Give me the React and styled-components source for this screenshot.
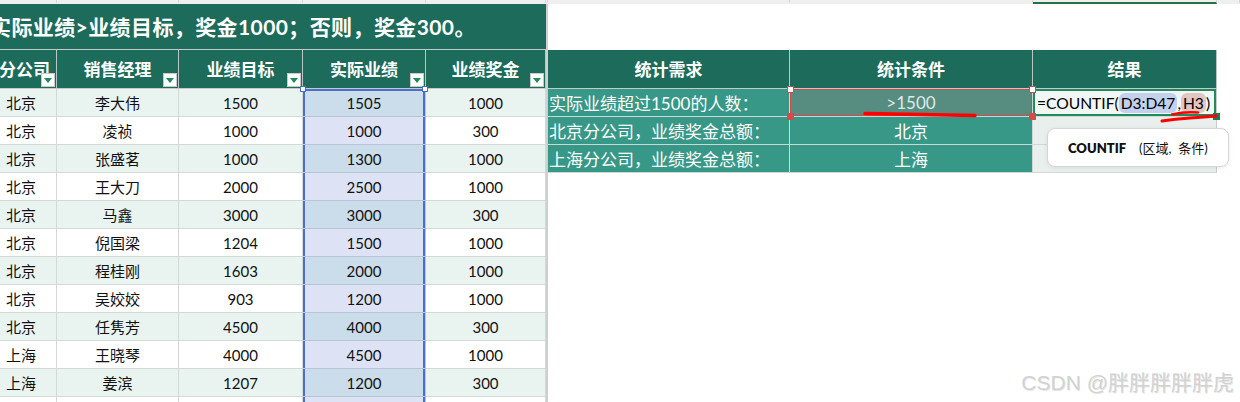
import React from 'react';
import styled, { createGlobalStyle } from 'styled-components';

const Global = createGlobalStyle`
  html, body { margin: 0; padding: 0; background: #fff; overflow: hidden; }
  #root { width: 1240px; height: 402px; }
`;

const FONT = `Lato, "Noto Sans CJK SC", sans-serif`;
const DARK = '#1d6b5b';
const TEAL = '#389887';
const GRID = '#d3d9d7';

const LEFT_COLS = [57, 122, 124, 123, 120];
const RIGHT_COLS = [242, 243, 184];

const Sheet = styled.div`
  position: relative;
  width: 1240px;
  height: 402px;
  overflow: hidden;
  background: #fff;
  font-family: ${FONT};
  display: flex;
  flex-direction: column;
`;

const ColumnStrip = styled.div`
  display: flex;
  height: 4px;
  flex-shrink: 0;
  background: #efefef;
`;

const StripCell = styled.div`
  box-sizing: border-box;
  width: ${(p) => (p.$w ? `${p.$w}px` : 'auto')};
  flex: ${(p) => (p.$w ? '0 0 auto' : '1')};
  border-right: 1px solid #d6d6d6;
  border-bottom: 2px solid ${(p) => (p.$active ? '#217346' : 'transparent')};
`;

const Body = styled.div`
  display: flex;
  flex: 1;
  min-height: 0;
  overflow: hidden;
`;

const LeftPane = styled.div`
  width: 546px;
  flex-shrink: 0;
  display: flex;
  flex-direction: column;
`;

const Divider = styled.div`
  width: 2px;
  flex-shrink: 0;
  background: #cfcfcf;
`;

const RightPane = styled.div`
  flex: 1;
  display: flex;
  flex-direction: column;
`;

const Title = styled.div`
  box-sizing: border-box;
  height: 46px;
  flex-shrink: 0;
  background: ${DARK};
  border-bottom: 1px solid #c4cbc9;
  color: #fff;
  font-size: 21px;
  font-weight: 700;
  display: flex;
  align-items: center;
  white-space: nowrap;
  overflow: hidden;
  padding-bottom: 2px;
`;

const TitleText = styled.span`
  margin-left: -10px;
  letter-spacing: 0.4px;
`;

const RightBlank = styled.div`
  height: 46px;
  flex-shrink: 0;
  background: #fff;
`;

const Row = styled.div`
  display: flex;
  flex-shrink: 0;
  height: ${(p) => p.$h}px;
`;

const HeadCell = styled.div`
  position: relative;
  box-sizing: border-box;
  width: ${(p) => p.$w}px;
  flex-shrink: 0;
  background: ${DARK};
  color: #fff;
  font-size: 17px;
  font-weight: 700;
  border-right: 1px solid #b9c6c2;
  border-bottom: 1px solid #c4cbc9;
  display: flex;
  align-items: center;
  justify-content: ${(p) => (p.$left ? 'flex-start' : 'center')};
  padding-bottom: 1px;
  white-space: nowrap;
  overflow: hidden;
`;

const ClipText = styled.span`
  margin-left: ${(p) => p.$shift || 0}px;
`;

const FilterButton = styled.span`
  position: absolute;
  right: 1px;
  bottom: 1px;
  width: 14px;
  height: 14px;
  box-sizing: border-box;
  background: #fff;
  border: 1px solid #c9c9c9;
  display: flex;
  align-items: center;
  justify-content: center;
  &::after {
    content: '';
    border-left: 4px solid transparent;
    border-right: 4px solid transparent;
    border-top: 5px solid #1f8a5c;
    margin-top: 1px;
  }
`;

const cellBg = (p) => {
  if (p.$sel) return p.$odd ? '#cbdcea' : '#dde3f4';
  return p.$odd ? '#e9f4f1' : '#ffffff';
};

const DataCell = styled.div`
  position: relative;
  box-sizing: border-box;
  width: ${(p) => p.$w}px;
  flex-shrink: 0;
  background: ${cellBg};
  color: #111;
  font-size: 15px;
  border-right: 1px solid ${(p) => (p.$sel ? '#b9c4d8' : GRID)};
  border-bottom: 1px solid ${(p) => (p.$sel ? '#b9c4d8' : GRID)};
  display: flex;
  align-items: center;
  justify-content: ${(p) => (p.$left ? 'flex-start' : 'center')};
  padding-left: ${(p) => (p.$left ? '6px' : '0')};
  box-shadow: ${(p) =>
    p.$sel
      ? `inset 2px 0 0 #4a6fd0, inset -2px 0 0 #4a6fd0${p.$first ? ', inset 0 2px 0 #4a6fd0' : ''}`
      : 'none'};
  white-space: nowrap;
`;

const SelHandle = styled.span`
  position: absolute;
  top: -3px;
  ${(p) => (p.$side === 'left' ? 'left: -3px;' : 'right: -3px;')}
  width: 6px;
  height: 6px;
  box-sizing: border-box;
  background: #fff;
  border: 1px solid #4a6fd0;
  z-index: 2;
`;

const StatHead = styled(HeadCell)`
  border-right: 1px solid #b9c6c2;
`;

const StatCell = styled.div`
  position: relative;
  box-sizing: border-box;
  width: ${(p) => p.$w}px;
  flex-shrink: 0;
  background: ${TEAL};
  color: #fff;
  font-size: 17px;
  border-right: 1px solid #c9d9d5;
  border-bottom: 1px solid #c9d9d5;
  display: flex;
  align-items: center;
  justify-content: ${(p) => (p.$left ? 'flex-start' : 'center')};
  padding-left: ${(p) => (p.$left ? '1px' : '0')};
  white-space: nowrap;
`;

const CriteriaCell = styled(StatCell)`
  background: #578c80;
  color: #dfe9e6;
  box-shadow: inset 0 0 0 1px #d24b4b;
`;

const CornerHandle = styled.span`
  position: absolute;
  width: 7px;
  height: 7px;
  box-sizing: border-box;
  border: 1px solid ${(p) => p.$color};
  background: ${(p) => (p.$filled ? p.$color : '#fff')};
  ${(p) => (p.$top ? 'top: -3px;' : 'bottom: -4px;')}
  ${(p) => (p.$leftSide ? 'left: -3px;' : 'right: -4px;')}
  z-index: 3;
`;

const ResultCell = styled.div`
  position: relative;
  box-sizing: border-box;
  width: ${(p) => p.$w}px;
  flex-shrink: 0;
  background: ${(p) => (p.$editing ? '#f1f7f5' : '#e8efed')};
  color: #000;
  font-size: 15.6px;
  border-right: 1px solid #c8cecc;
  border-bottom: 1px solid #d2d8d6;
  box-shadow: ${(p) => (p.$editing ? 'inset 0 0 0 2px #1f8a5c' : 'none')};
  display: flex;
  align-items: center;
  padding-left: 4px;
  white-space: nowrap;
`;

const Ref = styled.span`
  background: ${(p) => p.$bg};
  border-radius: 6px;
  padding: 1px 2px;
`;

const Tooltip = styled.div`
  position: absolute;
  left: 1047px;
  top: 128px;
  width: 182px;
  height: 39px;
  box-sizing: border-box;
  background: #fff;
  border: 1px solid #d6d6d6;
  border-radius: 8px;
  box-shadow: 0 1px 4px rgba(0, 0, 0, 0.08);
  display: flex;
  align-items: center;
  padding-left: 20px;
  font-size: 13px;
  color: #111;
  z-index: 5;
`;

const TipName = styled.b`
  font-weight: 800;
  margin-right: 13px;
`;

const Watermark = styled.div`
  position: absolute;
  right: 6px;
  bottom: 6px;
  font-family: "Liberation Sans", "Noto Sans CJK SC", sans-serif;
  font-size: 21px;
  color: #d2d2d2;
  text-shadow: 1px 1px 0 rgba(0, 0, 0, 0.1);
  white-space: nowrap;
  z-index: 6;
`;

const Ink = styled.svg`
  position: absolute;
  left: 0;
  top: 0;
  width: 1240px;
  height: 402px;
  pointer-events: none;
  z-index: 7;
`;

const headers = ['分公司', '销售经理', '业绩目标', '实际业绩', '业绩奖金'];

const data = [
  ['北京', '李大伟', '1500', '1505', '1000'],
  ['北京', '凌祯', '1000', '1000', '300'],
  ['北京', '张盛茗', '1000', '1300', '1000'],
  ['北京', '王大刀', '2000', '2500', '1000'],
  ['北京', '马鑫', '3000', '3000', '300'],
  ['北京', '倪国梁', '1204', '1500', '1000'],
  ['北京', '程桂刚', '1603', '2000', '1000'],
  ['北京', '吴姣姣', '903', '1200', '1000'],
  ['北京', '任隽芳', '4500', '4000', '300'],
  ['上海', '王晓琴', '4000', '4500', '1000'],
  ['上海', '姜滨', '1207', '1200', '300'],
  ['', '', '', '', ''],
];

const stats = [
  ['实际业绩超过1500的人数：', '>1500'],
  ['北京分公司，业绩奖金总额：', '北京'],
  ['上海分公司，业绩奖金总额：', '上海'],
];

export default function App() {
  return (
    <>
      <Global />
      <Sheet>
        <ColumnStrip>
          {LEFT_COLS.map((w, i) => (
            <StripCell key={i} $w={w} />
          ))}
          <StripCell $w={2} />
          {RIGHT_COLS.map((w, i) => (
            <StripCell key={`r${i}`} $w={w} $active={i === 2} />
          ))}
          <StripCell />
        </ColumnStrip>
        <Body>
          <LeftPane>
            <Title>
              <TitleText>实际业绩&gt;业绩目标，奖金1000；否则，奖金300。</TitleText>
            </Title>
            <Row $h={39}>
              {headers.map((h, i) => (
                <HeadCell key={h} $w={LEFT_COLS[i]} $left={i === 0}>
                  <ClipText $shift={i === 0 ? -1 : 0}>{h}</ClipText>
                  <FilterButton />
                </HeadCell>
              ))}
            </Row>
            {data.map((r, ri) => (
              <Row $h={28} key={ri}>
                {r.map((v, ci) => (
                  <DataCell
                    key={ci}
                    $w={LEFT_COLS[ci]}
                    $odd={ri % 2 === 0}
                    $left={ci === 0}
                    $sel={ci === 3}
                    $first={ri === 0}
                  >
                    {v}
                    {ci === 3 && ri === 0 && (
                      <>
                        <SelHandle $side="left" />
                        <SelHandle $side="right" />
                      </>
                    )}
                  </DataCell>
                ))}
              </Row>
            ))}
          </LeftPane>
          <Divider />
          <RightPane>
            <RightBlank />
            <Row $h={39}>
              <StatHead $w={RIGHT_COLS[0]}>统计需求</StatHead>
              <StatHead $w={RIGHT_COLS[1]}>统计条件</StatHead>
              <StatHead $w={RIGHT_COLS[2]}>结果</StatHead>
            </Row>
            {stats.map((s, i) => (
              <Row $h={28} key={i}>
                <StatCell $w={RIGHT_COLS[0]} $left>
                  {s[0]}
                </StatCell>
                {i === 0 ? (
                  <CriteriaCell $w={RIGHT_COLS[1]}>
                    {s[1]}
                    <CornerHandle $color="#d24b4b" $top $leftSide />
                    <CornerHandle $color="#d24b4b" $top />
                    <CornerHandle $color="#d24b4b" $filled $leftSide />
                    <CornerHandle $color="#d24b4b" $filled />
                  </CriteriaCell>
                ) : (
                  <StatCell $w={RIGHT_COLS[1]}>{s[1]}</StatCell>
                )}
                {i === 0 ? (
                  <ResultCell $w={RIGHT_COLS[2]} $editing>
                    =COUNTIF(<Ref $bg="#c3d1ee">D3:D47</Ref>,<Ref $bg="#e2c6c2">H3</Ref>)
                    <CornerHandle $color="#1f7a50" $filled />
                  </ResultCell>
                ) : (
                  <ResultCell $w={RIGHT_COLS[2]} />
                )}
              </Row>
            ))}
          </RightPane>
        </Body>
        <Tooltip>
          <TipName>COUNTIF</TipName>
          <span>(区域,&nbsp;&nbsp;条件)</span>
        </Tooltip>
        <Watermark>CSDN @胖胖胖胖胖虎</Watermark>
        <Ink viewBox="0 0 1240 402">
          <path d="M865 113.5 Q920 114.5 975 115.5" stroke="#ff0000" strokeWidth="3.5" fill="none" strokeLinecap="round" />
          <path d="M1162 121 Q1175 119 1190 118 Q1205 117 1216 116" stroke="#ff0000" strokeWidth="3" fill="none" strokeLinecap="round" />
          <path d="M1172 114.5 Q1184 111.5 1198 112.5" stroke="#ff0000" strokeWidth="2.5" fill="none" strokeLinecap="round" />
        </Ink>
      </Sheet>
    </>
  );
}
